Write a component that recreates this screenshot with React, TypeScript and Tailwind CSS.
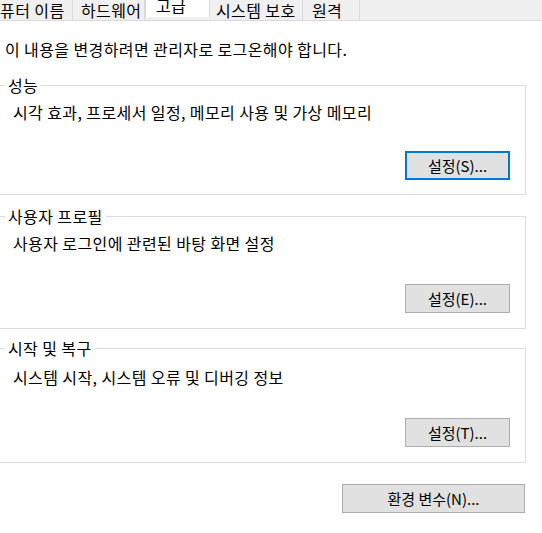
import React from "react";

type Tab = { id: string; text: string; width: string; pad: string };

const tabs: Tab[] = [
  { id: "1", text: "컴퓨터 이름", width: "w-[96px]", pad: "pl-[8px]" },
  { id: "2", text: "하드웨어", width: "w-[72px]", pad: "pl-[8px]" },
  { id: "3", text: "고급", width: "w-[65px]", pad: "pl-[10px]" },
  { id: "4", text: "시스템 보호", width: "w-[93px]", pad: "pl-[6px]" },
  { id: "5", text: "원격", width: "w-[57px]", pad: "pl-[9px]" },
];

const SELECTED = "3";

type Group = {
  id: string;
  title: string;
  desc: string;
  button: string;
  focused?: boolean;
  wrap: string;
  inner: string;
};

const groups: Group[] = [
  {
    id: "perf",
    title: "성능",
    desc: "시각 효과, 프로세서 일정, 메모리 사용 및 가상 메모리",
    button: "설정(S)...",
    focused: true,
    wrap: "mt-[26px]",
    inner: "pt-[16px] pb-[14px] gap-[29px]",
  },
  {
    id: "profile",
    title: "사용자 프로필",
    desc: "사용자 로그인에 관련된 바탕 화면 설정",
    button: "설정(E)...",
    wrap: "mt-[21px]",
    inner: "pt-[16px] pb-[15px] gap-[31px]",
  },
  {
    id: "startup",
    title: "시작 및 복구",
    desc: "시스템 시작, 시스템 오류 및 디버깅 정보",
    button: "설정(T)...",
    wrap: "mt-[19px]",
    inner: "pt-[18px] pb-[15px] gap-[31px]",
  },
];

const WinButton = ({ label, focused, className }: { label: string; focused?: boolean; className: string }) => (
  <button
    className={`${className} h-[29px] bg-[#e1e1e1] leading-[20px] text-black tracking-normal text-[15px] ${
      focused ? "border-2 border-[#0078d7]" : "border border-[#adadad]"
    }`}
  >
    {label}
  </button>
);

export default function App() {
  return (
    <div className="w-[542px] h-[533px] overflow-hidden bg-white text-black text-[16px] tracking-[0.4px] font-['Noto_Sans_CJK_KR','Noto_Sans',sans-serif]">
      {/* tab strip */}
      <div className="flex h-[21px] bg-[#f0f0f0] border-b border-[#d9d9d9]">
        <div className="flex -ml-[23px]">
          {tabs.map((tab) => {
            const active = tab.id === SELECTED;
            return (
              <div
                key={tab.id}
                className={`${tab.width} ${tab.pad} shrink-0 leading-[20px] whitespace-nowrap ${
                  active
                    ? "relative z-10 h-[22px] -mt-[5px] bg-white border-x border-[#d9d9d9]"
                    : "h-[20px] border-r border-[#d9d9d9]"
                }`}
              >
                {tab.text}
              </div>
            );
          })}
        </div>
      </div>

      <p className="mt-[18px] ml-[5px] leading-[20px]">이 내용을 변경하려면 관리자로 로그온해야 합니다.</p>

      {groups.map((group) => (
        <div
          key={group.id}
          className={`${group.wrap} relative -ml-[2px] w-[528px] border border-[#dcdcdc]`}
        >
          <span className="absolute -top-[11px] left-[6px] px-[3px] bg-white leading-[20px]">{group.title}</span>
          <div className={`flex flex-col ${group.inner} pl-[14px] pr-[15px]`}>
            <p className="leading-[20px]">{group.desc}</p>
            <div className="flex justify-end">
              <WinButton label={group.button} focused={group.focused} className="w-[105px]" />
            </div>
          </div>
        </div>
      ))}

      <div className="flex justify-end mt-[21px] pr-[17px]">
        <WinButton label="환경 변수(N)..." className="w-[183px]" />
      </div>
    </div>
  );
}
